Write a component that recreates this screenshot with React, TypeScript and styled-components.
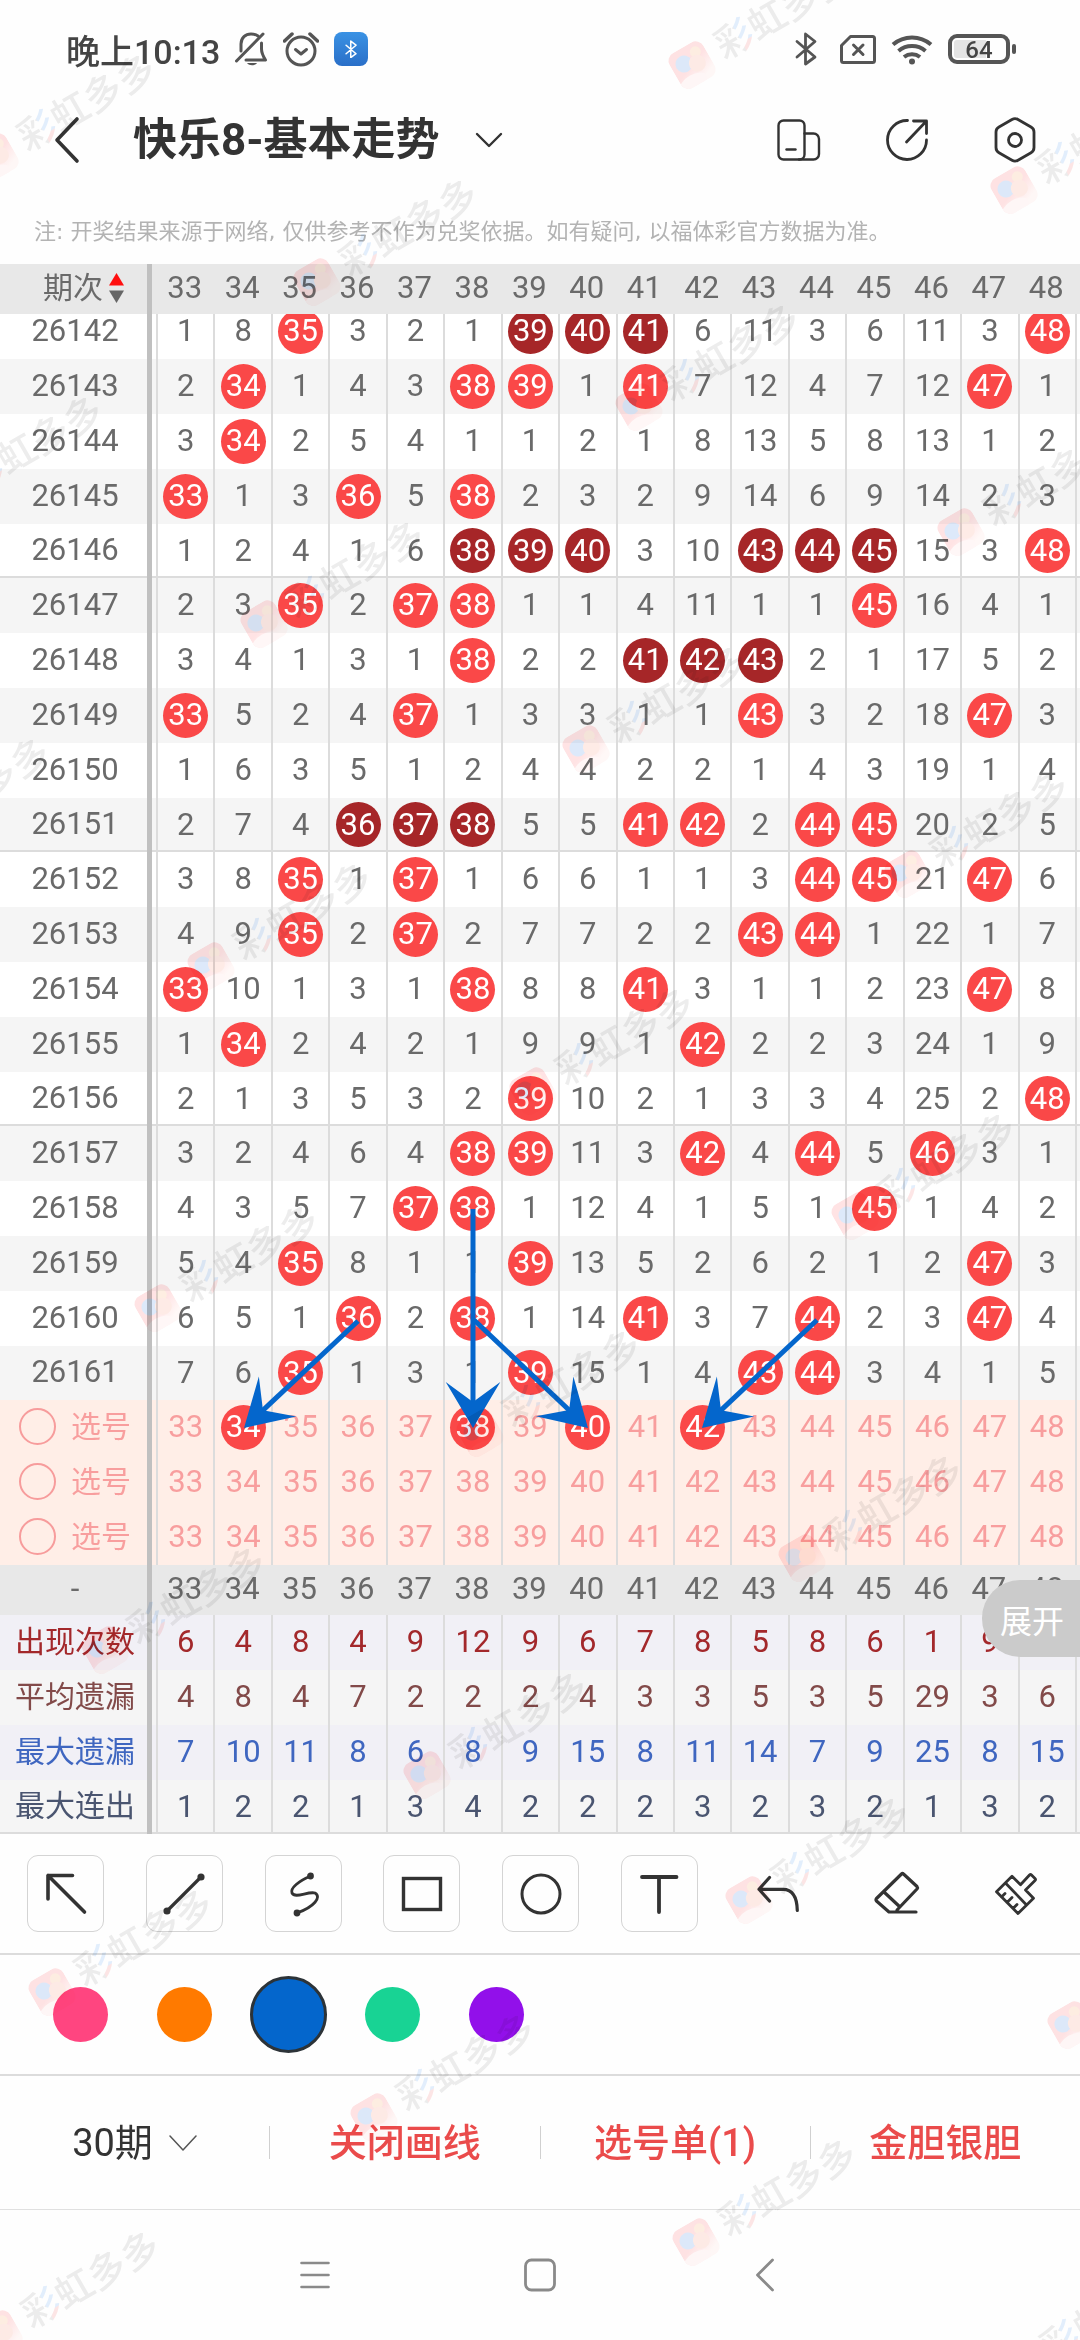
import React, { useState } from "react";
import styled, { createGlobalStyle, css } from "styled-components";

const GlobalStyle = createGlobalStyle`
  *, *::before, *::after { box-sizing: border-box; }
  body {
    margin: 0;
    background: #fefefe;
    color: #333;
    font-family: Roboto, "Noto Sans CJK SC", sans-serif;
  }
  button, input, select { font: inherit; color: inherit; margin: 0; padding: 0; }
  button { border: 0; background: none; cursor: pointer; }
  svg { display: block; flex: none; }
`;

/* ---------- data ---------- */

const COLUMNS = Array.from({ length: 16 }, (_, i) => 33 + i);

const FIRST_ISSUE = 26142;
const DRAWS = [
  [1, 8, 35, 3, 2, 1, 39, 40, 41, 6, 11, 3, 6, 11, 3, 48],
  [2, 34, 1, 4, 3, 38, 39, 1, 41, 7, 12, 4, 7, 12, 47, 1],
  [3, 34, 2, 5, 4, 1, 1, 2, 1, 8, 13, 5, 8, 13, 1, 2],
  [33, 1, 3, 36, 5, 38, 2, 3, 2, 9, 14, 6, 9, 14, 2, 3],
  [1, 2, 4, 1, 6, 38, 39, 40, 3, 10, 43, 44, 45, 15, 3, 48],
  [2, 3, 35, 2, 37, 38, 1, 1, 4, 11, 1, 1, 45, 16, 4, 1],
  [3, 4, 1, 3, 1, 38, 2, 2, 41, 42, 43, 2, 1, 17, 5, 2],
  [33, 5, 2, 4, 37, 1, 3, 3, 1, 1, 43, 3, 2, 18, 47, 3],
  [1, 6, 3, 5, 1, 2, 4, 4, 2, 2, 1, 4, 3, 19, 1, 4],
  [2, 7, 4, 36, 37, 38, 5, 5, 41, 42, 2, 44, 45, 20, 2, 5],
  [3, 8, 35, 1, 37, 1, 6, 6, 1, 1, 3, 44, 45, 21, 47, 6],
  [4, 9, 35, 2, 37, 2, 7, 7, 2, 2, 43, 44, 1, 22, 1, 7],
  [33, 10, 1, 3, 1, 38, 8, 8, 41, 3, 1, 1, 2, 23, 47, 8],
  [1, 34, 2, 4, 2, 1, 9, 9, 1, 42, 2, 2, 3, 24, 1, 9],
  [2, 1, 3, 5, 3, 2, 39, 10, 2, 1, 3, 3, 4, 25, 2, 48],
  [3, 2, 4, 6, 4, 38, 39, 11, 3, 42, 4, 44, 5, 46, 3, 1],
  [4, 3, 5, 7, 37, 38, 1, 12, 4, 1, 5, 1, 45, 1, 4, 2],
  [5, 4, 35, 8, 1, 1, 39, 13, 5, 2, 6, 2, 1, 2, 47, 3],
  [6, 5, 1, 36, 2, 38, 1, 14, 41, 3, 7, 44, 2, 3, 47, 4],
  [7, 6, 35, 1, 3, 1, 39, 15, 1, 4, 43, 44, 3, 4, 1, 5],
];

const STATS = [
  { label: "出现次数", color: "#a3282b", bg: "#f1f0f6", values: [6, 4, 8, 4, 9, 12, 9, 6, 7, 8, 5, 8, 6, 1, 9, 5] },
  { label: "平均遗漏", color: "#824a49", bg: "#f5f5f5", values: [4, 8, 4, 7, 2, 2, 2, 4, 3, 3, 5, 3, 5, 29, 3, 6] },
  { label: "最大遗漏", color: "#3f66c0", bg: "#f1f0f6", values: [7, 10, 11, 8, 6, 8, 9, 15, 8, 11, 14, 7, 9, 25, 8, 15] },
  { label: "最大连出", color: "#4a5570", bg: "#f5f5f5", values: [1, 2, 2, 1, 3, 4, 2, 2, 2, 3, 2, 3, 2, 1, 3, 2] },
];

const SWATCHES = [
  { name: "粉色", value: "#ff4580" },
  { name: "橙色", value: "#ff7a00" },
  { name: "蓝色", value: "#0466cc" },
  { name: "绿色", value: "#18d394" },
  { name: "紫色", value: "#9210ea" },
];

/* Three or more neighbouring hits in one draw form a run. */
const inRun = (row: number[], i: number) => {
  const hit = (k: number) => k >= 0 && k < row.length && row[k] === COLUMNS[k];
  let start = i;
  let end = i;
  while (hit(start - 1)) start--;
  while (hit(end + 1)) end++;
  return end - start >= 2;
};

/* ---------- page and top bars ---------- */

const Page = styled.div`
  position: relative;
  overflow: hidden;
  display: flex;
  flex-direction: column;
  background: #fefefe;
`;

const StatusBar = styled.div`
  height: 98px;
  padding: 0 64px 0 66px;
  display: flex;
  align-items: center;
  justify-content: space-between;
  color: #444;
`;

const StatusGroup = styled.div`
  display: flex;
  align-items: center;
  gap: 15px;
  font-size: 34px;
  font-weight: 500;
`;

const BluetoothSlot = styled.span`
  padding-right: 8px;
`;

const AppBadge = styled.span`
  width: 34px;
  height: 34px;
  border-radius: 8px;
  background: linear-gradient(#3a92e4, #2a6fc8);
  display: grid;
  place-items: center;
`;

const Battery = styled.div`
  display: flex;
  align-items: center;
  gap: 2px;
  &::after {
    content: "";
    width: 4px;
    height: 10px;
    border-radius: 2px;
    background: #555;
  }
`;

const BatteryCell = styled.span`
  width: 62px;
  height: 30px;
  border: 4px solid #555;
  border-radius: 9px;
  padding: 2px;
  display: flex;
`;

const BatteryLevel = styled.span`
  flex: 1;
  border-radius: 3px;
  background: linear-gradient(to right, #e4e4e4 64%, transparent 64%);
  font-size: 24px;
  line-height: 20px;
  text-align: center;
`;

const TitleBar = styled.header`
  height: 84px;
  padding: 0 43px 0 54px;
  display: flex;
  align-items: center;
  justify-content: space-between;
`;

const TitleGroup = styled.div`
  display: flex;
  align-items: center;
  gap: 53px;
`;

const TitleButton = styled.button`
  display: flex;
  align-items: center;
  gap: 35px;
`;

const Title = styled.span`
  font-size: 44px;
  line-height: 60px;
  font-weight: 700;
`;

const TitleActions = styled.nav`
  display: flex;
  gap: 64px;
`;

const ActionButton = styled.button`
  width: 44px;
  display: grid;
  place-items: center;
`;

const Notice = styled.p`
  margin: 0;
  padding: 34px 34px 16px;
  font-family: "DejaVu Sans", "Noto Sans CJK SC", sans-serif;
  font-size: 22px;
  line-height: 32px;
  color: #b3b3b3;
  white-space: nowrap;
`;

/* ---------- trend table ---------- */

const Chart = styled.main`
  position: relative;
`;

const Table = styled.table`
  display: flex;
  flex-direction: column;
  font-size: 31px;
  line-height: 36px;
  color: #6a6a6a;
`;

const HeadGroup = styled.thead`
  display: block;
  position: relative;
  z-index: 1;
`;

const DrawGroup = styled.tbody`
  display: block;
  margin-top: -10px;
`;

const PlainGroup = styled.tbody`
  display: block;
`;

const rowGrid = css`
  display: grid;
  grid-template-columns: 156px repeat(16, minmax(0, 1fr)) 5px;
`;

const Row = styled.tr<{ $bg: string; $color?: string; $short?: boolean; $ruled?: boolean }>`
  ${rowGrid}
  height: ${(p) => (p.$short ? 54 : 55)}px;
  background: ${(p) => p.$bg};
  color: ${(p) => p.$color ?? "inherit"};
  box-shadow: ${(p) => (p.$ruled ? "inset 0 -2px 0 #dcdcdc" : "none")};
`;

const TitleRow = styled.tr`
  ${rowGrid}
  height: 50px;
  background: #e8e8e8;
`;

const RowHead = styled.th<{ $indent?: boolean }>`
  margin-right: 4px;
  padding: 0 0 2px ${(p) => (p.$indent ? 20 : 3)}px;
  border-right: 5px solid #c0c0c0;
  display: flex;
  align-items: center;
  justify-content: center;
  gap: 6px;
  font-weight: 400;
`;

const CjkText = styled.span`
  font-size: 30px;
  line-height: 36px;
`;

const ColumnHead = styled.th`
  padding: 0 0 2px;
  display: grid;
  place-items: center;
  font-weight: 400;
`;

const Cell = styled.td`
  padding: 0 0 1px;
  border-left: 2px solid #dcdcdc;
  display: grid;
  place-items: center;
`;

const Ball = styled.span<{ $run: boolean }>`
  width: 45px;
  height: 45px;
  border-radius: 50%;
  background: ${(p) => (p.$run ? "#a62628" : "#fa4848")};
  color: #fff;
  display: grid;
  place-items: center;
`;

const Pick = styled.button`
  width: 45px;
  height: 45px;
  border-radius: 50%;
  display: grid;
  place-items: center;
  &[aria-pressed="true"] {
    background: #fa4848;
    color: #fff;
  }
`;

const PickLabel = styled.label`
  display: flex;
  align-items: center;
  gap: 15px;
`;

const PickRadio = styled.input`
  appearance: none;
  width: 37px;
  height: 37px;
  border: 2px solid #f79c9c;
  border-radius: 50%;
  &:checked { background: #f79c9c; }
`;

const ArrowLayer = styled.svg`
  position: absolute;
  inset: 0;
  width: 100%;
  height: 100%;
  pointer-events: none;
`;

const ExpandButton = styled.button`
  position: absolute;
  right: 0;
  bottom: 177px;
  z-index: 3;
  height: 77px;
  padding: 0 16px 0 18px;
  border-radius: 38px 0 0 38px;
  background: #cbcbcb;
  color: #fff;
  font-size: 32px;
`;

/* ---------- drawing tools and bottom bars ---------- */

const ToolBar = styled.div`
  height: 121px;
  padding: 0 26px 0 27px;
  border-bottom: 2px solid #dcdcdc;
  display: flex;
  align-items: center;
  justify-content: space-between;
`;

const Tool = styled.button<{ $framed: boolean }>`
  width: 77px;
  height: 77px;
  border: 1px solid ${(p) => (p.$framed ? "#d4d4d4" : "transparent")};
  border-radius: 11px;
  display: grid;
  place-items: center;
`;

const SwatchBar = styled.div`
  height: 121px;
  padding: 0 42px;
  border-bottom: 2px solid #dcdcdc;
  display: flex;
  align-items: center;
  gap: 27px;
`;

const Swatch = styled.input<{ $color: string }>`
  appearance: none;
  width: 55px;
  height: 55px;
  margin: 0 11px;
  border-radius: 50%;
  background: ${(p) => p.$color};
  cursor: pointer;
  &:checked {
    width: 77px;
    height: 77px;
    margin: 0;
    border: 3px solid #2c3338;
  }
`;

const ActionBar = styled.div`
  height: 134px;
  border-bottom: 1px solid #e0e0e0;
  display: flex;
  align-items: center;
  font-size: 38px;
  line-height: 52px;
`;

const ActionSlot = styled.div`
  flex: 1;
  display: flex;
  align-items: center;
  justify-content: center;
  gap: 16px;
`;

const Divider = styled.span`
  width: 1px;
  height: 33px;
  background: #d0d0d0;
`;

const PeriodSelect = styled.select`
  appearance: none;
  border: 0;
  background: none;
`;

const RedAction = styled.button`
  color: #ea4b4b;
  font-weight: 500;
`;

const SystemNav = styled.nav`
  height: 130px;
  display: flex;
  align-items: center;
  justify-content: center;
  gap: 193px;
`;

const NavButton = styled.button`
  width: 32px;
  display: grid;
  place-items: center;
`;

/* ---------- icons ---------- */

type StrokeIconProps = {
  w: number;
  h: number;
  stroke?: string;
  width?: number;
  children: React.ReactNode;
};

const StrokeIcon = ({ w, h, stroke = "#333", width = 3, children }: StrokeIconProps) => (
  <svg
    width={w}
    height={h}
    viewBox={`0 0 ${w} ${h}`}
    fill="none"
    stroke={stroke}
    strokeWidth={width}
    strokeLinecap="round"
    strokeLinejoin="round"
    aria-hidden="true"
  >
    {children}
  </svg>
);

const BellOffIcon = () => (
  <StrokeIcon w={33} h={34} stroke="#555">
    <path d="M6 19V12C6 5.500 10.500 2 16 2c3 0 5 .6 7 2" />
    <path d="M26.500 11v6c0 4 1.500 7 4 11H11" />
    <path d="M1.500 29 28 2" />
    <path d="M12 31h10c-2 3-8 3-10 0z" fill="#555" stroke="none" />
  </StrokeIcon>
);

const AlarmIcon = () => (
  <StrokeIcon w={36} h={35} stroke="#555">
    <circle cx="18" cy="19" r="14" />
    <path d="M1.500 9 9 2M27 2l7.500 7" strokeWidth="3.500" />
    <path d="m12.500 17.500 5.500 4.500 5.500-4.500" />
  </StrokeIcon>
);

const BluetoothIcon = ({ scale = 1, color = "#555" }: { scale?: number; color?: string }) => (
  <svg
    width={22 * scale}
    height={34 * scale}
    viewBox="0 0 22 34"
    fill="none"
    stroke={color}
    strokeWidth="2.800"
    strokeLinejoin="round"
    strokeLinecap="round"
    aria-hidden="true"
  >
    <path d="M2 9.500 20 25 10.500 32V2L20 9.500 2 25" />
  </svg>
);

const NoSimIcon = () => (
  <StrokeIcon w={36} h={29} stroke="#555">
    <path d="M10.500 1.500H32.500a2 2 0 0 1 2 2V25.500a2 2 0 0 1-2 2H3.500a2 2 0 0 1-2-2V10.500z" />
    <path d="m13.500 10 9.500 9.500M23 10l-9.500 9.500" />
  </StrokeIcon>
);

const WifiIcon = () => (
  <StrokeIcon w={42} h={31} stroke="#555" width={4}>
    <path d="M2 10.500a29 29 0 0 1 38 0" strokeLinecap="butt" />
    <path d="M7.500 17a21 21 0 0 1 27 0" strokeLinecap="butt" />
    <path d="M13 23a13 13 0 0 1 16 0" strokeLinecap="butt" />
    <circle cx="21" cy="27.500" r="3" fill="#555" stroke="none" />
  </StrokeIcon>
);

const BackIcon = () => (
  <StrokeIcon w={26} h={48} width={3.6}>
    <path d="M23 3 3 24l20 21" />
  </StrokeIcon>
);

const ChevronDown = ({ thin = false }: { thin?: boolean }) => (
  <StrokeIcon w={28} h={18} width={thin ? 1.5 : 2.4} stroke={thin ? "#555" : "#333"}>
    <path d={thin ? "M1 2l13 14L27 2" : "M2 3l12 12L26 3"} />
  </StrokeIcon>
);

const DevicesIcon = () => (
  <StrokeIcon w={44} h={42} width={2.4}>
    <rect x="1.500" y="1.500" width="26" height="39" rx="5" />
    <path d="M9.500 30.500h9" />
    <path d="M27.500 14.500h9a5.500 5.500 0 0 1 5.500 5.500v15a5.500 5.500 0 0 1-5.500 5.500H22" />
  </StrokeIcon>
);

const ShareIcon = () => (
  <StrokeIcon w={42} h={44} width={2.8}>
    <path d="M21.500 2.500A19.500 19.500 0 1 0 40.500 22" />
    <path d="M20.500 24 40 3.500M27.500 3H40.500V15.500" />
  </StrokeIcon>
);

const HexIcon = () => (
  <StrokeIcon w={42} h={46} width={2.8}>
    <path d="M18 2.500Q21 .8 24 2.500L37 10Q40 11.700 40 15V30.500Q40 34 37 35.700L24 43.300Q21 45 18 43.300L5 35.700Q2 34 2 30.500V15Q2 11.700 5 10Z" />
    <circle cx="21" cy="23" r="6.500" />
  </StrokeIcon>
);

const SortIcon = () => (
  <svg width="15" height="30" viewBox="0 0 15 30" aria-hidden="true">
    <path d="M7.500 0 15 12.500H0z" fill="#ff0f0f" />
    <path d="M7.500 30 15 17.500H0z" fill="#666" />
  </svg>
);

const TOOLS: { name: string; framed: boolean; width: number; art: React.ReactNode }[] = [
  { name: "箭头", framed: true, width: 3.6, art: <path d="M30.500 5.500H6V29M6 5.500 42.500 42" /> },
  {
    name: "直线",
    framed: true,
    width: 3.2,
    art: (
      <>
        <path d="M41 7 7 41" />
        <circle cx="41" cy="7" r="2" fill="#333" />
        <circle cx="7" cy="41" r="2" fill="#333" />
      </>
    ),
  },
  {
    name: "曲线",
    framed: true,
    width: 2.8,
    art: (
      <>
        <path d="M31.500 6C20 11 11 18 13 23c3 6 16-2 23 0 7 4-1 14-18 20" />
        <circle cx="31.500" cy="6" r="2" fill="#333" />
        <circle cx="18" cy="43" r="2" fill="#333" />
      </>
    ),
  },
  { name: "矩形", framed: true, width: 3.4, art: <rect x="5.500" y="8.500" width="37" height="31" strokeLinejoin="miter" /> },
  { name: "圆形", framed: true, width: 3, art: <circle cx="24" cy="24" r="19" /> },
  { name: "文字", framed: true, width: 3.8, art: <path d="M7 7H41.500M24 7V42" /> },
  { name: "撤销", framed: false, width: 3.2, art: <path d="M15.500 7.500 5 19.300 15.500 31M5 19.300H29C39 19.300 43 27 43.300 40.500" /> },
  {
    name: "橡皮",
    framed: false,
    width: 3.2,
    art: <path d="M43 42H16L3.500 31Q2.500 30 3.500 28.500L28.500 4Q29.500 3 30.500 4L44 16.500Q45 17.700 44 19L24 40M11 22 27 37" />,
  },
  {
    name: "清空",
    framed: false,
    width: 2.8,
    art: (
      <path d="M20 6.300 4.500 21.700 26 43.500 41.500 28.300 33.500 20 43 10.500Q44 9.500 43 8.500L39.500 5Q38.500 4 37.500 5L28.500 14.700ZM13.700 13.300 34.300 34.700M9.500 27l3.500-3.500M15 32.500l5-5M21 38.500l4-4" />
    ),
  },
];

/* ---------- hand-drawn arrows on the chart ---------- */

const ARROWS = [
  { from: [358, 1057], to: [244, 1164] },
  { from: [473, 945], to: [473, 1164] },
  { from: [474, 1056], to: [588, 1164] },
  { from: [817, 1056], to: [702, 1164] },
];

const Arrow = ({ from, to, color }: { from: number[]; to: number[]; color: string }) => {
  const length = Math.hypot(to[0] - from[0], to[1] - from[1]);
  const angle = (Math.atan2(to[1] - from[1], to[0] - from[0]) * 180) / Math.PI;
  return (
    <g transform={`translate(${to[0]} ${to[1]}) rotate(${angle})`} fill={color}>
      <rect x={-length} y="-2.500" width={length - 20} height="5" />
      <path d="M0 0-46-27.300-26 0-46 27.300z" />
    </g>
  );
};

/* ---------- brand watermark ---------- */

const WatermarkLayer = styled.svg`
  position: absolute;
  inset: 0;
  z-index: 2;
  width: 100%;
  height: 100%;
  pointer-events: none;
  mix-blend-mode: multiply;
`;

const markSpots = () => {
  const spots: [number, number][] = [];
  for (let m = -3; m <= 10; m++) {
    for (let n = -4; n <= 12; n++) {
      const x = 692 + m * 322 - n * 375;
      const y = 64 + m * 125 + n * 217;
      if (x > -220 && x < 1110 && y > -40 && y < 2460) spots.push([x, y]);
    }
  }
  return spots;
};

const Watermark = () => (
  <WatermarkLayer aria-hidden="true">
    <defs>
      <pattern id="firstGlyph" patternUnits="userSpaceOnUse" x="30" y="-24" width="200" height="60">
        <rect width="24" height="60" fill="#ededed" />
        <rect x="24" width="20" height="30" fill="#e3effd" />
        <rect x="24" y="30" width="20" height="30" fill="#fde6e6" />
      </pattern>
      <linearGradient id="markBg" x1="0" y1="0" x2=".4" y2="1">
        <stop offset=".6" stopColor="#ffe3e4" />
        <stop offset="1" stopColor="#fff8f7" />
      </linearGradient>
      <clipPath id="markClip">
        <rect x="-20" y="-19" width="39" height="40" rx="9" />
      </clipPath>
    </defs>
    {markSpots().map(([x, y]) => (
      <g key={`${x},${y}`} transform={`translate(${x} ${y}) rotate(-30)`}>
        <g clipPath="url(#markClip)">
          <rect x="-20" y="-19" width="39" height="40" fill="url(#markBg)" />
          <circle cx="-7" cy="-4" r="8.500" fill="#dde9fa" />
          <circle cx="9" cy="-9" r="5.500" fill="#feeee2" />
          <circle cx="5" cy="2" r="8.500" fill="#feebe6" />
          <ellipse cx="-8" cy="17" rx="15" ry="8" fill="#fff7f7" />
        </g>
        <text x="30" y="13" fontSize="38" fontWeight="500" fill="#ededed">
          <tspan fill="url(#firstGlyph)">彩</tspan>虹多多
        </text>
      </g>
    ))}
  </WatermarkLayer>
);

/* ---------- screen ---------- */

const ColumnTitles = () => (
  <>
    {COLUMNS.map((n) => (
      <ColumnHead key={n} scope="col">{n}</ColumnHead>
    ))}
  </>
);

export default function App() {
  const [picks, setPicks] = useState<number[][]>([[34, 38, 40, 42], [], []]);
  const [color, setColor] = useState("#0466cc");

  const togglePick = (row: number, n: number) =>
    setPicks((all) =>
      all.map((set, i) => (i !== row ? set : set.includes(n) ? set.filter((v) => v !== n) : [...set, n]))
    );

  return (
    <Page>
      <GlobalStyle />

      <StatusBar>
        <StatusGroup>
          <span>晚上10:13</span>
          <BellOffIcon />
          <AlarmIcon />
          <AppBadge>
            <BluetoothIcon scale={0.55} color="#fff" />
          </AppBadge>
        </StatusGroup>
        <StatusGroup>
          <BluetoothSlot><BluetoothIcon /></BluetoothSlot>
          <NoSimIcon />
          <WifiIcon />
          <Battery>
            <BatteryCell>
              <BatteryLevel>64</BatteryLevel>
            </BatteryCell>
          </Battery>
        </StatusGroup>
      </StatusBar>

      <TitleBar>
        <TitleGroup>
          <button aria-label="返回"><BackIcon /></button>
          <TitleButton>
            <Title>快乐8-基本走势</Title>
            <ChevronDown />
          </TitleButton>
        </TitleGroup>
        <TitleActions>
          <ActionButton aria-label="横屏"><DevicesIcon /></ActionButton>
          <ActionButton aria-label="分享"><ShareIcon /></ActionButton>
          <ActionButton aria-label="设置"><HexIcon /></ActionButton>
        </TitleActions>
      </TitleBar>

      <Notice>注: 开奖结果来源于网络, 仅供参考不作为兑奖依据。如有疑问, 以福体彩官方数据为准。</Notice>

      <Chart>
        <Table>
          <HeadGroup>
            <TitleRow>
              <RowHead scope="col" $indent>
                <CjkText>期次</CjkText>
                <SortIcon />
              </RowHead>
              <ColumnTitles />
            </TitleRow>
          </HeadGroup>

          <DrawGroup>
            {DRAWS.map((row, r) => (
              <Row
                key={r}
                $bg={r % 2 ? "#f5f5f5" : "#fff"}
                $short={r % 5 === 4}
                $ruled={r % 5 === 4 && r < DRAWS.length - 1}
              >
                <RowHead scope="row">{FIRST_ISSUE + r}</RowHead>
                {row.map((v, i) => (
                  <Cell key={i}>{v === COLUMNS[i] ? <Ball $run={inRun(row, i)}>{v}</Ball> : v}</Cell>
                ))}
                <Cell />
              </Row>
            ))}
          </DrawGroup>

          <PlainGroup>
            {picks.map((set, r) => (
              <Row key={r} $bg="#ffeee7" $color="#f89e9e">
                <RowHead scope="row">
                  <PickLabel>
                    <PickRadio type="radio" name="pick-row" />
                    <CjkText>选号</CjkText>
                  </PickLabel>
                </RowHead>
                {COLUMNS.map((n) => (
                  <Cell key={n}>
                    <Pick aria-pressed={set.includes(n)} onClick={() => togglePick(r, n)}>{n}</Pick>
                  </Cell>
                ))}
                <Cell />
              </Row>
            ))}
          </PlainGroup>

          <PlainGroup>
            <TitleRow>
              <RowHead scope="col">-</RowHead>
              <ColumnTitles />
            </TitleRow>
            {STATS.map((stat, s) => (
              <Row
                key={stat.label}
                $bg={stat.bg}
                $color={stat.color}
                $short={s === STATS.length - 1}
                $ruled={s === STATS.length - 1}
              >
                <RowHead scope="row"><CjkText>{stat.label}</CjkText></RowHead>
                {stat.values.map((v, i) => (
                  <Cell key={i}>{v}</Cell>
                ))}
                <Cell />
              </Row>
            ))}
          </PlainGroup>
        </Table>

        <ArrowLayer viewBox="0 0 1080 1570" preserveAspectRatio="none" aria-hidden="true">
          {ARROWS.map((a, i) => (
            <Arrow key={i} from={a.from} to={a.to} color="#0466cc" />
          ))}
        </ArrowLayer>
        <ExpandButton>展开</ExpandButton>
      </Chart>

      <ToolBar>
        {TOOLS.map((t) => (
          <Tool key={t.name} $framed={t.framed} aria-label={t.name}>
            <StrokeIcon w={48} h={48} width={t.width}>{t.art}</StrokeIcon>
          </Tool>
        ))}
      </ToolBar>

      <SwatchBar>
        {SWATCHES.map((s) => (
          <Swatch
            key={s.value}
            type="radio"
            name="pen-color"
            aria-label={s.name}
            $color={s.value}
            checked={color === s.value}
            onChange={() => setColor(s.value)}
          />
        ))}
      </SwatchBar>

      <ActionBar>
        <ActionSlot>
          <PeriodSelect aria-label="期数" defaultValue="30">
            <option value="30">30期</option>
            <option value="50">50期</option>
          </PeriodSelect>
          <ChevronDown thin />
        </ActionSlot>
        <Divider />
        <ActionSlot><RedAction>关闭画线</RedAction></ActionSlot>
        <Divider />
        <ActionSlot><RedAction>选号单(1)</RedAction></ActionSlot>
        <Divider />
        <ActionSlot><RedAction>金胆银胆</RedAction></ActionSlot>
      </ActionBar>

      <SystemNav>
        <NavButton aria-label="菜单">
          <StrokeIcon w={32} h={32} stroke="#8a8a8a" width={2.6}>
            <path d="M2.500 4H29.500M2.500 16H29.500M2.500 28H29.500" />
          </StrokeIcon>
        </NavButton>
        <NavButton aria-label="主页">
          <StrokeIcon w={32} h={34} stroke="#8a8a8a" width={2.8}>
            <rect x="1.500" y="2" width="29" height="30" rx="6" />
          </StrokeIcon>
        </NavButton>
        <NavButton aria-label="后退">
          <StrokeIcon w={20} h={34} stroke="#8a8a8a" width={2.8}>
            <path d="M17.500 2 2.500 17l15 15" />
          </StrokeIcon>
        </NavButton>
      </SystemNav>

      <Watermark />
    </Page>
  );
}
